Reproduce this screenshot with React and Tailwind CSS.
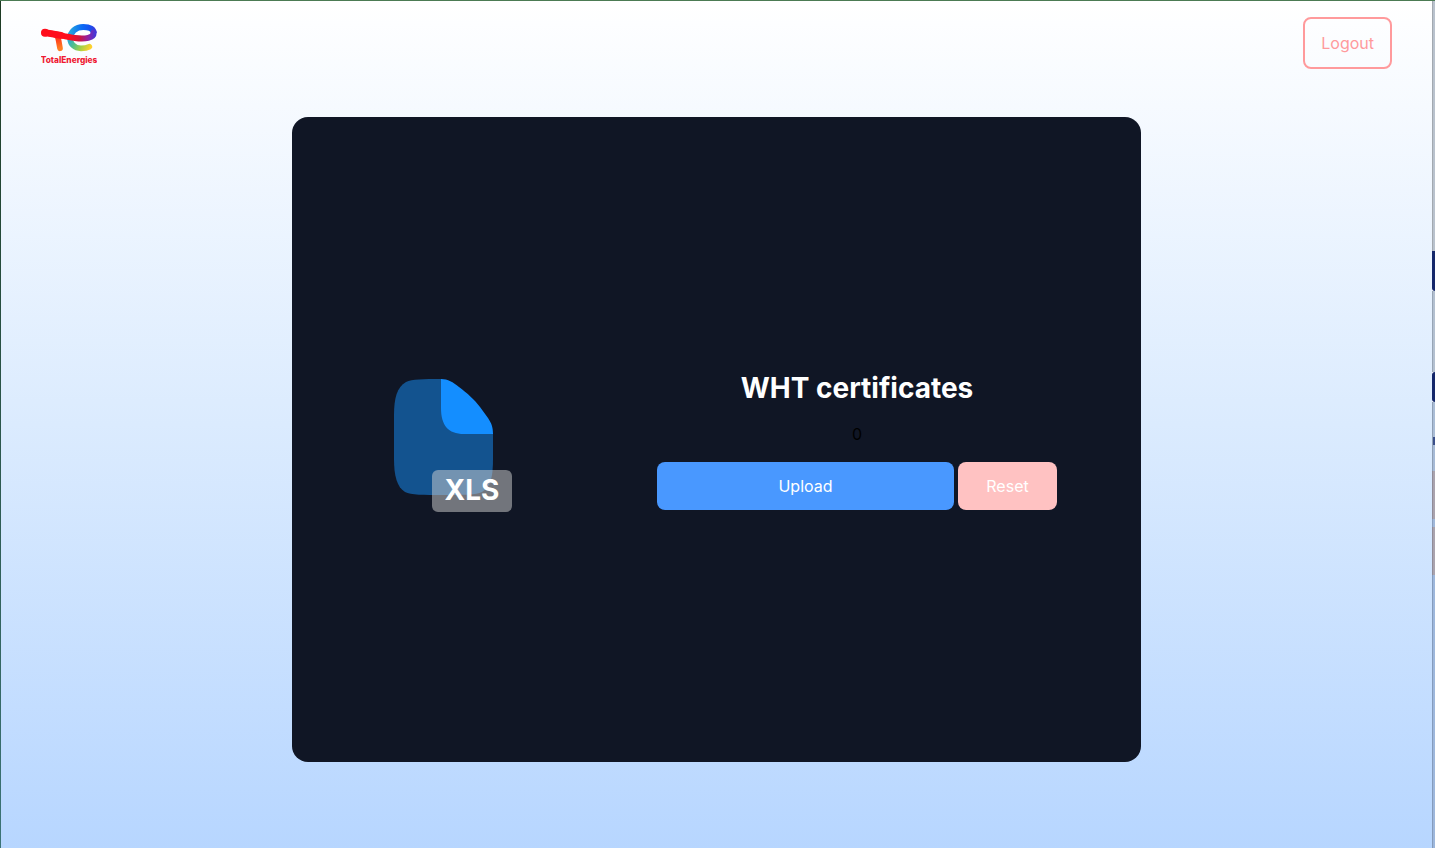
import React from 'react'

const edgeMarks = [
  { height: 'h-[250px]', color: 'border-l border-[#a3a9b0] bg-[#b9c2cd]' },
  { height: 'h-10', color: 'bg-[#14276a] rounded-bl-sm' },
  { height: 'h-[81px]', color: 'border-l border-[#98a5b5] bg-[#b3c0d0]' },
  { height: 'h-[30px]', color: 'bg-[#14276a] rounded-l-sm' },
  { height: 'h-[35px]', color: 'border-l border-[#8f9fb5] bg-[#aabdd6]' },
  { height: 'h-2', color: 'border-l border-[#8f9fb5] bg-[#3a4f8a]' },
  { height: 'h-[26px]', color: 'border-l border-[#8f9fb5] bg-[#a6bad6]' },
  { height: 'h-12', color: 'border-l border-[#918c98] bg-[#a9a3ae]' },
  { height: 'h-2', color: 'border-l border-[#8a9fbe] bg-[#a0b8da]' },
  { height: 'h-12', color: 'border-l border-[#918c98] bg-[#a9a3ae]' },
  { height: 'flex-1', color: 'border-l border-[#869cbc] bg-[#9db7dc]' },
]

function Logo() {
  return (
    <svg viewBox="0 0 168 138" className="w-14 h-[46px]" role="img" aria-label="TotalEnergies">
      <defs>
        <linearGradient id="bar" gradientUnits="userSpaceOnUse" x1="0" y1="0" x2="164" y2="0">
          <stop offset="0.5" stopColor="#ff0d1c" />
          <stop offset="0.7" stopColor="#d0143c" />
          <stop offset="0.85" stopColor="#9520a0" />
          <stop offset="1" stopColor="#4338d8" />
        </linearGradient>
        <linearGradient id="stem" gradientUnits="userSpaceOnUse" x1="48" y1="42" x2="60" y2="84">
          <stop offset="0" stopColor="#ff1a1a" />
          <stop offset="1" stopColor="#ff7f22" />
        </linearGradient>
        <linearGradient id="loop" gradientUnits="userSpaceOnUse" x1="86" y1="0" x2="166" y2="0">
          <stop offset="0" stopColor="#25a5dc" />
          <stop offset="0.45" stopColor="#0a6cf5" />
          <stop offset="0.75" stopColor="#1452f0" />
          <stop offset="1" stopColor="#4338d8" />
        </linearGradient>
        <linearGradient id="tail" gradientUnits="userSpaceOnUse" x1="84" y1="50" x2="148" y2="84">
          <stop offset="0" stopColor="#25a5dc" />
          <stop offset="0.35" stopColor="#55c086" />
          <stop offset="0.65" stopColor="#a5d045" />
          <stop offset="1" stopColor="#ffd12e" />
        </linearGradient>
      </defs>
      <g fill="none" strokeLinecap="round" strokeLinejoin="round">
        <path d="M87 54C88 73 101 85 120 85C130 85 138 84 145 80" stroke="url(#tail)" strokeWidth="17" />
        <path d="M87 56C88 35 104 21 127 21C147 21 158 28 158 39" stroke="url(#loop)" strokeWidth="18" strokeLinecap="butt" />
        <path d="M36 42C49 44 51 50 53 62L57 85" stroke="url(#stem)" strokeWidth="17" />
        <path d="M12 38C44 41 70 50 102 54C133 58 158 54 158 38" stroke="url(#bar)" strokeWidth="18" />
        <path d="M12 38L60 46" stroke="#ff0d1c" strokeWidth="21" />
        <circle cx="12" cy="38" r="12" fill="#ff0d1c" />
      </g>
      <text x="84" y="130" textAnchor="middle" fontSize="25" fontWeight="800" fill="#ef1a33" fontFamily="Inter, sans-serif">
        TotalEnergies
      </text>
    </svg>
  )
}

function XlsIcon() {
  return (
    <svg viewBox="0 0 154 154" className="w-[154px] h-[154px] shrink-0" role="img" aria-label="XLS file">
      <path
        d="M65 16C47 16 36 16 30 19C21 24 18 35 18 52V96C18 113 21 124 29 129C35 132 47 132 67 132C88 132 100 132 106 129C115 124 117 113 117 96V71L65 16Z"
        fill="#13538f"
      />
      <path d="M65 16C72 16 77 19 83 24C91 30 99 37 104 44L112 55C116 61 117 65 117 71H88C72 71 65 62 65 45V16Z" fill="#148eff" />
      <rect x="56" y="107" width="80" height="42" rx="6" fill="#d4d4d4" fillOpacity="0.5" />
      <text x="96" y="137" textAnchor="middle" fontSize="28" fontWeight="700" fill="#fff" fontFamily="Inter, sans-serif">
        XLS
      </text>
    </svg>
  )
}

export default function App() {
  return (
    <div className="flex min-h-screen border-t border-[#4b7b54] font-['Inter',sans-serif] text-base">
      <div className="w-px bg-linear-to-b from-[#1d3a22] to-[#3c7476]" />
      <div className="flex-1 flex flex-col bg-linear-to-b from-white via-[#dbebfe] to-[#b7d6ff]">
        <header className="flex items-center justify-between px-10 py-4">
          <a href="#home">
            <Logo />
          </a>
          <button type="button" className="px-4 py-3 rounded-lg border-2 border-[#ff9a9c] text-[#ff9a9c]">
            Logout
          </button>
        </header>
        <main className="flex justify-center px-2 pt-8">
          <section className="w-3/5 min-h-[calc(100vh-203px)] px-[84px] flex items-center justify-between rounded-2xl bg-[#101625]">
            <XlsIcon />
            <div className="w-[400px] flex flex-col gap-4 text-center">
              <h1 className="text-[28px] leading-9 font-bold text-white">WHT certificates</h1>
              <p className="text-black">0</p>
              <div className="flex gap-1 text-white">
                <button type="button" className="flex-3 py-3 rounded-lg bg-[#4998ff]">Upload</button>
                <button type="button" className="flex-1 py-3 rounded-lg bg-[#ffc2c2]">Reset</button>
              </div>
            </div>
          </section>
        </main>
      </div>
      <div className="w-[3px] flex flex-col">
        {edgeMarks.map((mark, i) => (
          <div key={i} className={`${mark.height} ${mark.color}`} />
        ))}
      </div>
    </div>
  )
}
